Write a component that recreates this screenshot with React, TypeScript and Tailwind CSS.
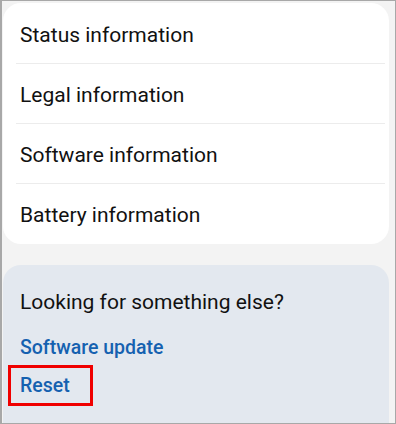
const rows = ["Status information", "Legal information", "Software information", "Battery information"];

export default function App() {
  return (
    <div
      className="h-[424px] w-[396px] overflow-hidden border border-l-2 border-[#a8a8a8] bg-[#f3f3f3] pt-[2px] pl-px pr-[6px]"
      style={{ fontFamily: "Roboto, 'Noto Sans', sans-serif" }}
    >
      <ul className="rounded-[18px] bg-white pt-px pl-[13px] pr-[4px]">
        {rows.map((r, i) => (
          <li
            key={r}
            className={
              "flex h-[60px] items-center px-1 pt-[4px] text-[21px] text-[#111] " +
              (i < rows.length - 1 ? "border-b border-[#ececec]" : "")
            }
          >
            {r}
          </li>
        ))}
      </ul>
      <div className="mt-[21px] h-[200px] rounded-[18px] bg-[#e3e8ef] pl-[17px] pt-[22px]">
        <p className="text-[21px] text-[#111]">Looking for something else?</p>
        <p className="mt-[14px] text-[19.5px] font-medium text-[#1561b0]">Software update</p>
        <div className="-ml-[12px] mt-[3px] inline-block border-[3px] border-[#f00000] py-[3px] pl-[9px] pr-[20px]">
          <span className="text-[19.5px] font-medium text-[#1561b0]">Reset</span>
        </div>
      </div>
    </div>
  );
}
